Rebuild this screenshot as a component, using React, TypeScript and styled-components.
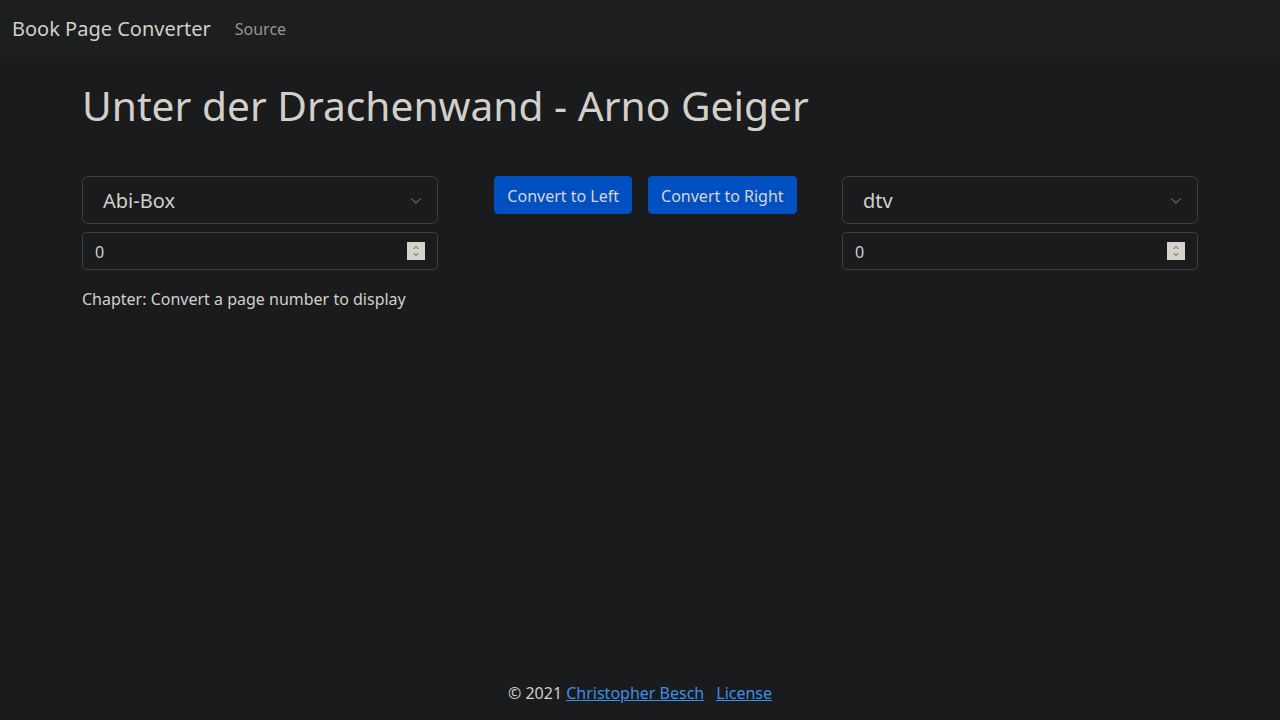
import styled, { createGlobalStyle } from "styled-components";

const GlobalStyle = createGlobalStyle`
    html, body {
        margin: 0;
        padding: 0;
        background-color: #1a1b1d;
        color: #d3cfc9;
        font-family: "Noto Sans", "Open Sans", sans-serif;
        font-size: 16px;
        line-height: 1.5;
    }
    * {
        box-sizing: border-box;
    }
`;

const Page = styled.div`
    min-height: 100vh;
    display: flex;
    flex-direction: column;
`;

const Navbar = styled.nav`
    display: flex;
    align-items: center;
    height: 57px;
    padding: 1px 12px 0;
    background-color: #1c1e1f;
`;

const Brand = styled.a`
    font-size: 20px;
    color: #d3cfc9;
    text-decoration: none;
    margin-right: 16px;
`;

const NavLink = styled.a`
    font-size: 16px;
    color: #9b958c;
    text-decoration: none;
    padding: 8px;
`;

const Container = styled.main`
    width: 1140px;
    margin: 24px auto 0;
    padding: 0 12px;
`;

const Title = styled.h1`
    margin: 0;
    font-size: 40.7px;
    font-weight: 400;
    line-height: 48px;
`;

const Row = styled.div`
    display: grid;
    grid-template-columns: repeat(3, 1fr);
    column-gap: 24px;
    margin-top: 47px;
`;

const Column = styled.div`
    display: flex;
    flex-direction: column;
`;

const ButtonRow = styled.div`
    display: flex;
    justify-content: center;
    gap: 16px;
    padding-left: 11px;
`;

const Button = styled.button`
    font-family: inherit;
    font-size: 16px;
    line-height: 1.5;
    color: #d8d4cf;
    background-color: #0050c2;
    border: 1px solid #0050c2;
    border-radius: 4px;
    padding: 7px 12px 5px;
    cursor: pointer;
`;

const SelectBox = styled.div`
    display: flex;
    align-items: center;
    justify-content: space-between;
    height: 48px;
    padding: 1px 15px 0 20px;
    font-size: 20px;
    color: #d3cfc9;
    background-color: #1a1b1d;
    border: 1px solid #3b3f41;
    border-radius: 6px;
`;

const NumberBox = styled.div`
    display: flex;
    align-items: center;
    height: 38px;
    margin-top: 8px;
    padding: 0 12px;
    background-color: #1a1b1d;
    border: 1px solid #3b3f41;
    border-radius: 4px;
`;

const NumberInput = styled.input`
    flex: 1;
    min-width: 0;
    border: 0;
    outline: none;
    background: transparent;
    color: #d3cfc9;
    font-family: inherit;
    font-size: 16px;
    padding: 2px 0 0;
    -moz-appearance: textfield;
    &::-webkit-inner-spin-button,
    &::-webkit-outer-spin-button {
        -webkit-appearance: none;
        margin: 0;
    }
`;

const Spinner = styled.span`
    display: flex;
    align-items: center;
    justify-content: center;
    width: 18px;
    height: 18px;
    background-color: #d6d2cc;
`;

const ChapterText = styled.p`
    margin: 17px 0 0;
    font-size: 16px;
`;

const Footer = styled.footer`
    margin-top: auto;
    padding: 0 0 15px;
    text-align: center;
    font-size: 16px;
`;

const FooterLink = styled.a`
    color: #3d8fe8;
    text-decoration: underline;
    & + & {
        margin-left: 12px;
    }
`;

function Chevron() {
    return (
        <svg width="12" height="8" viewBox="0 0 12 8" fill="none">
            <path d="M1.5 1.5 L6 6 L10.5 1.5" stroke="#5c6063" strokeWidth="1.3" />
        </svg>
    );
}

function SpinIcon() {
    return (
        <svg width="10" height="14" viewBox="0 0 10 14" fill="none">
            <path d="M2.5 5 L5 2.5 L7.5 5" stroke="#8e8983" strokeWidth="1.1" />
            <path d="M2.5 9 L5 11.5 L7.5 9" stroke="#8e8983" strokeWidth="1.1" />
        </svg>
    );
}

function EditionPicker({ edition }: { edition: string }) {
    return (
        <>
            <SelectBox>
                <span>{edition}</span>
                <Chevron />
            </SelectBox>
            <NumberBox>
                <NumberInput type="number" defaultValue={0} />
                <Spinner>
                    <SpinIcon />
                </Spinner>
            </NumberBox>
        </>
    );
}

export default function App() {
    return (
        <Page>
            <GlobalStyle />
            <Navbar>
                <Brand href="#">Book Page Converter</Brand>
                <NavLink href="#">Source</NavLink>
            </Navbar>

            <Container>
                <Title>Unter der Drachenwand - Arno Geiger</Title>
                <Row>
                    <Column>
                        <EditionPicker edition="Abi-Box" />
                        <ChapterText>Chapter: Convert a page number to display</ChapterText>
                    </Column>
                    <Column>
                        <ButtonRow>
                            <Button>Convert to Left</Button>
                            <Button>Convert to Right</Button>
                        </ButtonRow>
                    </Column>
                    <Column>
                        <EditionPicker edition="dtv" />
                    </Column>
                </Row>
            </Container>

            <Footer>
                © 2021 <FooterLink href="#">Christopher Besch</FooterLink>
                <FooterLink href="#">License</FooterLink>
            </Footer>
        </Page>
    );
}
